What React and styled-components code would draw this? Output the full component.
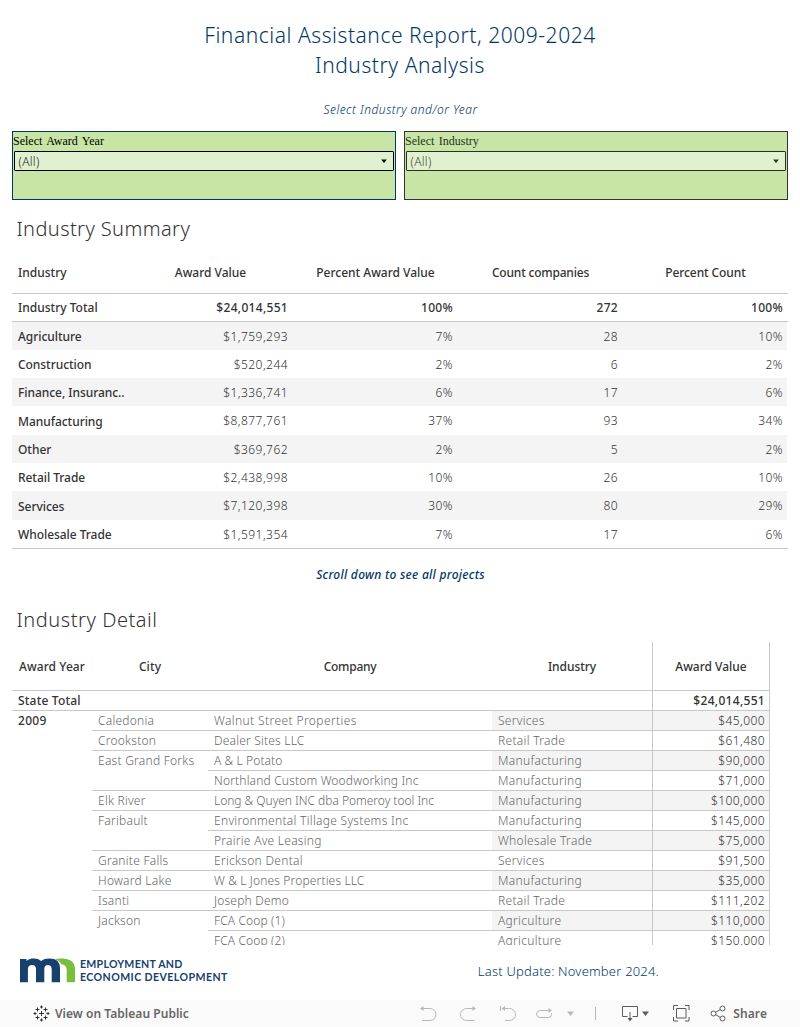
import React from "react";
import styled, { createGlobalStyle } from "styled-components";

const Global = createGlobalStyle`
  * { box-sizing: border-box; }
  body { margin: 0; background: #fff; }
`;

const Page = styled.main`
  width: 800px;
  height: 1027px;
  overflow: hidden;
  display: flex;
  flex-direction: column;
  font-family: "Noto Sans", "Open Sans", sans-serif;
  font-size: 12px;
  color: #333;
  white-space: nowrap;
`;

const Title = styled.h1`
  margin: 0;
  padding-top: 20px;
  height: 98px;
  font-size: 21px;
  line-height: 30px;
  font-weight: 300;
  letter-spacing: 0.54px;
  text-align: center;
  color: #003865;
`;

const Hint = styled.p`
  margin: 0;
  padding: ${(p) => p.$top || 0}px 0 0 1px;
  height: ${(p) => p.$height}px;
  line-height: 24px;
  text-align: center;
  font-style: italic;
  font-weight: ${(p) => p.$weight};
  letter-spacing: ${(p) => p.$track}px;
  color: #003865;
`;

const Filters = styled.section`
  display: flex;
  gap: 8px;
  padding: 0 12px;
`;

const FilterBox = styled.div`
  width: 384px;
  height: 69px;
  border: 1px solid ${(p) => (p.$dim ? "#333" : "#003865")};
  background: #c8e5a5;
  color: ${(p) => (p.$dim ? "#27331f" : "#000")};
`;

const FilterLabel = styled.div`
  height: 19px;
  line-height: 19px;
  font-family: "Liberation Serif", serif;
  font-size: 12px;
  word-spacing: 1.5px;
`;

const Select = styled.div`
  margin: 0 1px;
  height: 20px;
  border: 1px solid currentColor;
  border-radius: 1px;
  background: #e1f0cf;
  display: flex;
  align-items: center;
  justify-content: space-between;
  padding: 0 6px 0 3.5px;
`;

const SelectValue = styled.span`
  font-weight: 300;
  letter-spacing: 0.3px;
  color: ${(p) => (p.$dim ? "#3d4637" : "#222")};
`;

const SectionTitle = styled.h2`
  margin: 0;
  padding-left: 16.5px;
  height: ${(p) => p.$height}px;
  padding-top: ${(p) => p.$top}px;
  font-size: 20px;
  line-height: 28px;
  font-weight: 300;
  letter-spacing: ${(p) => p.$track}px;
  color: #333;
`;

const Summary = styled.section`
  margin: 0 12px;
  border-bottom: 1px solid #c8c8c8;
`;

const SummaryRow = styled.div`
  display: grid;
  grid-template-columns: 116px repeat(4, 165px);
  height: ${(p) => p.$height}px;
  align-items: center;
  background: linear-gradient(${(p) => (p.$band ? "#f4f4f4, #f4f4f4" : "#fff, #fff")}) 0 0 / 775px 100% no-repeat;
  border-bottom: ${(p) => (p.$line ? "1px solid #c8c8c8" : "none")};
`;

const SummaryHead = styled.span`
  text-align: ${(p) => (p.$left ? "left" : "center")};
  padding: 1px 0 0 ${(p) => (p.$left ? 6 : 0)}px;
  font-weight: 500;
  letter-spacing: ${(p) => p.$track || 0}px;
`;

const SummaryLabel = styled.span`
  padding: ${(p) => (p.$raised ? 0 : 1)}px 0 0 6px;
  font-weight: 500;
  letter-spacing: ${(p) => (p.$raised ? 0 : -0.05)}px;
`;

const SummaryValue = styled.span`
  padding-right: 5px;
  text-align: right;
  font-weight: ${(p) => (p.$strong ? 500 : 300)};
  letter-spacing: ${(p) => (p.$strong ? 0.3 : 0.45)}px;
`;

const Detail = styled.section`
  margin-left: 12px;
  width: 758px;
  height: 303px;
  overflow: hidden;
`;

const DetailRow = styled.div`
  display: grid;
  grid-template-columns: 80px 116px 284px 160px 118px;
  height: ${(p) => p.$height || 20}px;
`;

const Cell = styled.div`
  display: flex;
  align-items: center;
  justify-content: ${(p) => p.$align || "flex-start"};
  padding: ${(p) => (p.$align === "center" ? "1px 0 0" : "0 4px 0 6px")};
  font-weight: ${(p) => (p.$strong ? 500 : 300)};
  letter-spacing: ${(p) => (p.$track === undefined ? 0.3 : p.$track)}px;
  color: ${(p) => (p.$muted ? "#666" : "#333")};
  background: ${(p) => (p.$band ? "#f4f4f4" : "#fff")};
  border-bottom: 1px solid ${(p) => (p.$open ? "transparent" : "#c8c8c8")};
`;

const ValueCell = styled(Cell)`
  border-left: 1px solid #c8c8c8;
  border-right: 1px solid #c8c8c8;
`;

const Footer = styled.footer`
  flex: 1;
  display: flex;
  justify-content: space-between;
  padding: 12px 141px 0 19px;
`;

const Brand = styled.div`
  display: flex;
  gap: 5px;
  height: 27px;
`;

const BrandName = styled.div`
  font-family: Lato, sans-serif;
  font-weight: 700;
  font-size: 10.6px;
  line-height: 12.5px;
  color: #17406d;
  padding-top: 1px;
`;

const BrandLine = styled.div`
  letter-spacing: ${(p) => p.$track}px;
`;

const Updated = styled.div`
  line-height: 29px;
  font-size: 13px;
  font-weight: 300;
  letter-spacing: 0.2px;
  color: #003865;
`;

const Toolbar = styled.nav`
  height: 27px;
  background: #fafafa;
  display: flex;
  align-items: center;
  padding: 0 33px;
  color: #666;
`;

const ToolLabel = styled.span`
  font-weight: 600;
  font-size: 12px;
  letter-spacing: ${(p) => p.$track}px;
  margin-left: ${(p) => p.$gap}px;
`;

const Tools = styled.div`
  display: flex;
  align-items: center;
  margin-left: auto;
`;

const Icon = styled.svg`
  display: block;
  fill: none;
  stroke: currentColor;
  stroke-width: 1;
  color: ${(p) => (p.$off ? "#b8b8b8" : "#5c5c5c")};
  margin-left: ${(p) => p.$gap || 0}px;
`;

const TableauMark = styled(Icon)`
  color: #333;
`;

const CaretIcon = styled.svg`
  display: block;
  fill: ${(p) => p.$fill || "currentColor"};
  margin-left: ${(p) => p.$gap || 0}px;
`;

const Divider = styled.i`
  width: 1px;
  height: 13px;
  background: #b8b8b8;
  margin: 0 26px 0 21px;
`;

const Caret = ({ small, ...rest }) => (
  <CaretIcon width={small ? 6 : 7} height={small ? 4 : 5} viewBox="0 0 7 5" {...rest}>
    <path d="M0 0.5H7L3.5 5Z" />
  </CaretIcon>
);

const marks = [
  [8.5, 8.5, 2.5], [8.5, 2, 1.5], [8.5, 15, 1.5], [2, 8.5, 1.5], [15, 8.5, 1.5],
  [4.5, 4.5, 2], [12.5, 4.5, 2], [4.5, 12.5, 2], [12.5, 12.5, 2],
];

const summary = [
  [28, "Agriculture", "$1,759,293", "7%", "28", "10%"],
  [28, "Construction", "$520,244", "2%", "6", "2%"],
  [28, "Finance, Insuranc..", "$1,336,741", "6%", "17", "6%"],
  [29, "Manufacturing", "$8,877,761", "37%", "93", "34%"],
  [28, "Other", "$369,762", "2%", "5", "2%"],
  [28, "Retail Trade", "$2,438,998", "10%", "26", "10%"],
  [29, "Services", "$7,120,398", "30%", "80", "29%"],
  [28, "Wholesale Trade", "$1,591,354", "7%", "17", "6%"],
];

const detail = [
  ["Caledonia", "Walnut Street Properties", "Services", "$45,000", 0.4],
  ["Crookston", "Dealer Sites LLC", "Retail Trade", "$61,480", 0.2],
  ["East Grand Forks", "A & L Potato", "Manufacturing", "$90,000", 0.1],
  ["", "Northland Custom Woodworking Inc", "Manufacturing", "$71,000", 0.17],
  ["Elk River", "Long & Quyen INC dba Pomeroy tool Inc", "Manufacturing", "$100,000", -0.02],
  ["Faribault", "Environmental Tillage Systems Inc", "Manufacturing", "$145,000", 0.3],
  ["", "Prairie Ave Leasing", "Wholesale Trade", "$75,000", 0.26],
  ["Granite Falls", "Erickson Dental", "Services", "$91,500", 0.3],
  ["Howard Lake", "W & L Jones Properties LLC", "Manufacturing", "$35,000", 0.15],
  ["Isanti", "Joseph Demo", "Retail Trade", "$111,202", 0.2],
  ["Jackson", "FCA Coop (1)", "Agriculture", "$110,000", 0.13],
  ["", "FCA Coop (2)", "Agriculture", "$150,000", 0.13],
];

function Filter({ label, dim }) {
  return (
    <FilterBox $dim={dim}>
      <FilterLabel>{label}</FilterLabel>
      <Select>
        <SelectValue $dim={dim}>(All)</SelectValue>
        <Caret small />
      </Select>
    </FilterBox>
  );
}

function SummaryTable() {
  return (
    <Summary>
      <SummaryRow $height={43} $line>
        <SummaryHead $left>Industry</SummaryHead>
        <SummaryHead>Award Value</SummaryHead>
        <SummaryHead>Percent Award Value</SummaryHead>
        <SummaryHead $track={-0.2}>Count companies</SummaryHead>
        <SummaryHead $track={-0.1}>Percent Count</SummaryHead>
      </SummaryRow>
      <SummaryRow $height={28} $line>
        <SummaryLabel $raised>Industry Total</SummaryLabel>
        {["$24,014,551", "100%", "272", "100%"].map((v, i) => (
          <SummaryValue key={i} $strong>{v}</SummaryValue>
        ))}
      </SummaryRow>
      {summary.map(([h, label, ...values], r) => (
        <SummaryRow key={label} $height={h} $band={r % 2 === 0}>
          <SummaryLabel>{label}</SummaryLabel>
          {values.map((v, i) => <SummaryValue key={i}>{v}</SummaryValue>)}
        </SummaryRow>
      ))}
    </Summary>
  );
}

function DetailTable() {
  return (
    <Detail>
      <DetailRow $height={49}>
        <Cell $strong $align="center" $track={0.1}>Award Year</Cell>
        <Cell $strong $align="center" $track={0.1}>City</Cell>
        <Cell $strong $align="center" $track={-0.25}>Company</Cell>
        <Cell $strong $align="center" $track={-0.05}>Industry</Cell>
        <ValueCell $strong $align="center" $track={0}>Award Value</ValueCell>
      </DetailRow>
      <DetailRow>
        <Cell $strong $track={0.2}>State Total</Cell>
        <Cell /><Cell /><Cell />
        <ValueCell $strong $align="flex-end">$24,014,551</ValueCell>
      </DetailRow>
      {detail.map(([city, company, industry, value, track], i) => {
        const next = detail[i + 1];
        return (
          <DetailRow key={company}>
            <Cell $strong $open>{i === 0 ? "2009" : ""}</Cell>
            <Cell $muted $track={0.25} $open={next && next[0] === ""}>{city}</Cell>
            <Cell $muted $track={track}>{company}</Cell>
            <Cell $muted $band={i % 2 === 0}>{industry}</Cell>
            <ValueCell $align="flex-end" $track={0.42} $band={i % 2 === 0}>{value}</ValueCell>
          </DetailRow>
        );
      })}
    </Detail>
  );
}

export default function App() {
  return (
    <Page>
      <Global />
      <Title>Financial Assistance Report, 2009-2024<br />Industry Analysis</Title>
      <Hint $height={33} $weight={300} $track={0.5}>Select Industry and/or Year</Hint>
      <Filters>
        <Filter label="Select Award Year" />
        <Filter label="Select Industry" dim />
      </Filters>
      <SectionTitle $height={51} $top={15} $track={0.4}>Industry Summary</SectionTitle>
      <SummaryTable />
      <Hint $top={14} $height={43} $weight={500} $track={0.28}>Scroll down to see all projects</Hint>
      <SectionTitle $height={50} $top={14} $track={0.55}>Industry Detail</SectionTitle>
      <DetailTable />
      <Footer>
        <Brand>
          <svg width="56" height="27" viewBox="0 0 56 27">
            <path d="M1 2H7.5V4C9.5 2 12 1.500 15 1.500C18 1.500 20.3 2.300 22 4C24.2 2.300 27 1.500 30.5 1.500C37 1.500 41 4.5 41 11V25.300H32.700V12C32.700 9.5 31 8 29 8C26.600 8 25.300 9.5 25.300 12V25.300H17V12C17 9.500 15.500 8 13.300 8C10.500 8 8.900 9.500 8.900 12V25.300H1Z" fill="#17406d" />
            <path d="M36 2.300C38 1.700 40 1.500 43 1.500C51 1.500 56 5 56 12V25.300H47.700V13C47.700 9.500 45.500 7.500 42 7C41.500 5 39 3.300 36 2.300Z" fill="#78be3f" />
          </svg>
          <BrandName>
            <BrandLine $track={0.25}>EMPLOYMENT AND</BrandLine>
            <BrandLine $track={0.42}>ECONOMIC DEVELOPMENT</BrandLine>
          </BrandName>
        </Brand>
        <Updated>Last Update: November 2024.</Updated>
      </Footer>
      <Toolbar>
        <TableauMark width="17" height="17" viewBox="0 0 17 17">
          {marks.map(([x, y, r]) => (
            <path key={`${x}-${y}`} d={`M${x - r} ${y}H${x + r}M${x} ${y - r}V${y + r}`} />
          ))}
        </TableauMark>
        <ToolLabel $gap={5} $track={0.04}>View on Tableau Public</ToolLabel>
        <Tools>
          <Icon $off width="17" height="17" viewBox="0 0 17 17">
            <path d="M1 3.500H10A6 6 0 0 1 10 15.500H2" />
            <path d="M0 3.500L3.500 1V6Z" fill="currentColor" stroke="none" />
          </Icon>
          <Icon $off $gap={23} width="17" height="17" viewBox="0 0 17 17">
            <path d="M15 3.500H6.500A6 6 0 0 0 6.500 15.500H14.500" />
            <path d="M16 3.500L12.500 1V6Z" fill="currentColor" stroke="none" />
          </Icon>
          <Icon $off $gap={23} width="17" height="17" viewBox="0 0 17 17">
            <path d="M0.500 1V6M3 3.500H9.500A6 6 0 0 1 9.500 15.500H5" />
            <path d="M1.500 3.500L5 1V6Z" fill="currentColor" stroke="none" />
          </Icon>
          <Icon $off $gap={19} width="17" height="17" viewBox="0 0 17 17">
            <path d="M14 5.500H4A3.500 3.500 0 0 0 4 12.500H12.500A3.500 3.500 0 0 0 15.500 8" />
            <path d="M16 5.500L12.500 3V8Z" fill="currentColor" stroke="none" />
          </Icon>
          <Caret $fill="#b8b8b8" $gap={14} />
          <Divider />
          <Icon width="17" height="17" viewBox="0 0 17 17">
            <path d="M5.500 11.500H0.500V1.500H15.500V11.500H10.500M8 7V15" />
            <path d="M5.500 13H10.500L8 16.500Z" fill="currentColor" stroke="none" />
          </Icon>
          <Caret $fill="#5c5c5c" $gap={3} />
          <Icon $gap={24} width="17" height="17" viewBox="0 0 17 17">
            <path d="M0.500 5V0.500H5M12 0.500H16V5M16 12V16H12M5 16H0.500V12M3.500 3.500H13V13H3.500Z" />
          </Icon>
          <Icon $gap={20} width="17" height="17" viewBox="0 0 17 17">
            <path d="M6 7.200L10 4.700M6 9.800L10 12.300" />
            <circle cx="3.500" cy="8.500" r="2.500" />
            <circle cx="12.500" cy="3.500" r="2.500" />
            <circle cx="12.500" cy="13.500" r="2.500" />
          </Icon>
          <ToolLabel $gap={6} $track={0.1}>Share</ToolLabel>
        </Tools>
      </Toolbar>
    </Page>
  );
}
